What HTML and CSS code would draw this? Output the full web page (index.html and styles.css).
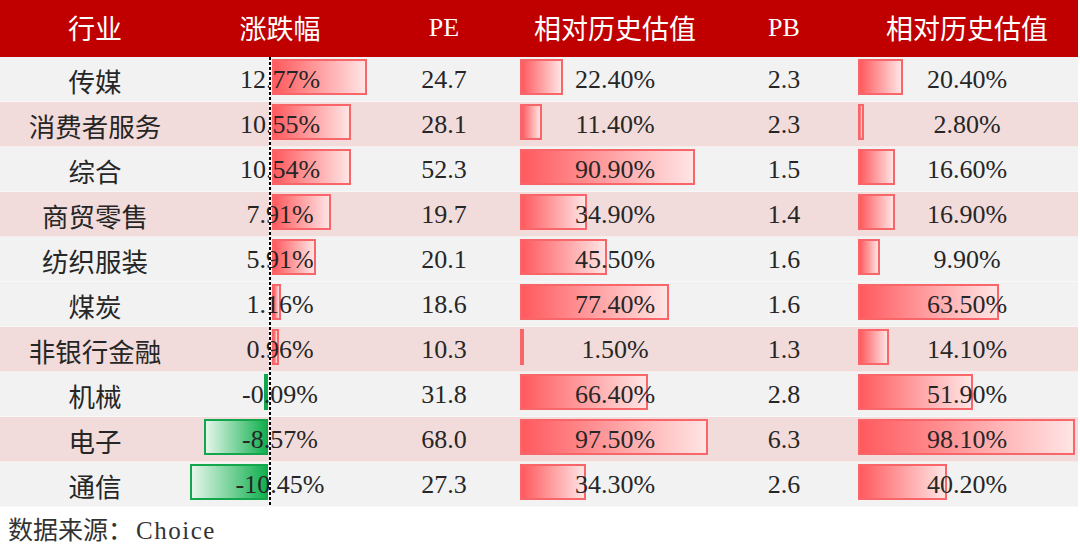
FILE: index.html
```html
<!DOCTYPE html>
<html lang="zh">
<head>
<meta charset="utf-8">
<link rel="stylesheet" href="styles.css">
</head>
<body>
<div class="table">
  <div class="row head">
    <div class="cell">行业</div>
    <div class="cell">涨跌幅</div>
    <div class="cell lat">PE</div>
    <div class="cell">相对历史估值</div>
    <div class="cell lat">PB</div>
    <div class="cell">相对历史估值</div>
  </div>

  <div class="row odd">
    <div class="cell name">传媒</div>
    <div class="cell chg"><span class="bar pos" style="width:95px"></span><span class="txt">12.77%</span></div>
    <div class="cell num">24.7</div>
    <div class="cell val"><span class="bar r4" style="width:43px"></span><span class="txt">22.40%</span></div>
    <div class="cell num">2.3</div>
    <div class="cell val"><span class="bar r6" style="width:45px"></span><span class="txt">20.40%</span></div>
  </div>
  <div class="row even">
    <div class="cell name">消费者服务</div>
    <div class="cell chg"><span class="bar pos" style="width:79px"></span><span class="txt">10.55%</span></div>
    <div class="cell num">28.1</div>
    <div class="cell val"><span class="bar r4" style="width:22px"></span><span class="txt">11.40%</span></div>
    <div class="cell num">2.3</div>
    <div class="cell val"><span class="bar r6" style="width:6px"></span><span class="txt">2.80%</span></div>
  </div>
  <div class="row odd">
    <div class="cell name">综合</div>
    <div class="cell chg"><span class="bar pos" style="width:79px"></span><span class="txt">10.54%</span></div>
    <div class="cell num">52.3</div>
    <div class="cell val"><span class="bar r4" style="width:175px"></span><span class="txt">90.90%</span></div>
    <div class="cell num">1.5</div>
    <div class="cell val"><span class="bar r6" style="width:37px"></span><span class="txt">16.60%</span></div>
  </div>
  <div class="row even">
    <div class="cell name">商贸零售</div>
    <div class="cell chg"><span class="bar pos" style="width:59px"></span><span class="txt">7.91%</span></div>
    <div class="cell num">19.7</div>
    <div class="cell val"><span class="bar r4" style="width:67px"></span><span class="txt">34.90%</span></div>
    <div class="cell num">1.4</div>
    <div class="cell val"><span class="bar r6" style="width:37px"></span><span class="txt">16.90%</span></div>
  </div>
  <div class="row odd">
    <div class="cell name">纺织服装</div>
    <div class="cell chg"><span class="bar pos" style="width:44px"></span><span class="txt">5.91%</span></div>
    <div class="cell num">20.1</div>
    <div class="cell val"><span class="bar r4" style="width:87px"></span><span class="txt">45.50%</span></div>
    <div class="cell num">1.6</div>
    <div class="cell val"><span class="bar r6" style="width:22px"></span><span class="txt">9.90%</span></div>
  </div>
  <div class="row odd">
    <div class="cell name">煤炭</div>
    <div class="cell chg"><span class="bar pos" style="width:9px"></span><span class="txt">1.16%</span></div>
    <div class="cell num">18.6</div>
    <div class="cell val"><span class="bar r4" style="width:149px"></span><span class="txt">77.40%</span></div>
    <div class="cell num">1.6</div>
    <div class="cell val"><span class="bar r6" style="width:141px"></span><span class="txt">63.50%</span></div>
  </div>
  <div class="row even">
    <div class="cell name">非银行金融</div>
    <div class="cell chg"><span class="bar pos" style="width:7px"></span><span class="txt">0.96%</span></div>
    <div class="cell num">10.3</div>
    <div class="cell val"><span class="bar r4" style="width:4px"></span><span class="txt">1.50%</span></div>
    <div class="cell num">1.3</div>
    <div class="cell val"><span class="bar r6" style="width:31px"></span><span class="txt">14.10%</span></div>
  </div>
  <div class="row odd">
    <div class="cell name">机械</div>
    <div class="cell chg"><span class="bar neg" style="width:2px"></span><span class="txt">-0.09%</span></div>
    <div class="cell num">31.8</div>
    <div class="cell val"><span class="bar r4" style="width:128px"></span><span class="txt">66.40%</span></div>
    <div class="cell num">2.8</div>
    <div class="cell val"><span class="bar r6" style="width:115px"></span><span class="txt">51.90%</span></div>
  </div>
  <div class="row even">
    <div class="cell name">电子</div>
    <div class="cell chg"><span class="bar neg" style="width:64px"></span><span class="txt">-8.57%</span></div>
    <div class="cell num">68.0</div>
    <div class="cell val"><span class="bar r4" style="width:188px"></span><span class="txt">97.50%</span></div>
    <div class="cell num">6.3</div>
    <div class="cell val"><span class="bar r6" style="width:217px"></span><span class="txt">98.10%</span></div>
  </div>
  <div class="row odd">
    <div class="cell name">通信</div>
    <div class="cell chg"><span class="bar neg" style="width:78px"></span><span class="txt">-10.45%</span></div>
    <div class="cell num">27.3</div>
    <div class="cell val"><span class="bar r4" style="width:66px"></span><span class="txt">34.30%</span></div>
    <div class="cell num">2.6</div>
    <div class="cell val"><span class="bar r6" style="width:89px"></span><span class="txt">40.20%</span></div>
  </div>
  <div class="axis"></div>
</div>
<div class="source">数据来源：<span class="lat">Choice</span></div>
</body>
</html>
```

FILE: styles.css
```css
html, body {
  margin: 0;
  padding: 0;
  background: #ffffff;
}
body {
  width: 1080px;
  font-family: "Liberation Serif", "Noto Sans CJK SC", serif;
  color: #262626;
}
.table {
  position: relative;
  width: 1078px;
}
.row {
  display: grid;
  grid-template-columns: 190px 180px 148px 194px 144px 222px;
  height: 45px;
}
.row.head {
  height: 57px;
  background: #c00000;
  color: #ffffff;
  font-family: "Noto Sans CJK SC", sans-serif;
  font-size: 27px;
}
.row.head .cell {
  padding-bottom: 2px;
  font-size: 27px;
}
.row.head .lat {
  font-family: "Liberation Serif", serif;
  font-size: 26px;
}
.row.odd { background: #f2f2f2; }
.row.even { background: #f2dcdb; }
.row.odd, .row.even {
  box-shadow: inset 0 -1px 0 rgba(255,255,255,0.45);
}
.cell {
  position: relative;
  display: flex;
  align-items: center;
  justify-content: center;
  font-size: 26px;
  white-space: nowrap;
}
.cell.name {
  font-family: "Noto Sans CJK SC", sans-serif;
  font-size: 26.5px;
  font-weight: 400;
  color: #262626;
  padding-top: 2px;
}
.txt {
  position: relative;
  z-index: 2;
}
.bar {
  position: absolute;
  top: 2px;
  height: 36px;
  box-sizing: border-box;
  z-index: 1;
}
.bar.pos, .bar.r4, .bar.r6 {
  border: 2px solid #f8666a;
  background: linear-gradient(to right, #ff5a5e, #ffe4e4);
}
.bar.pos { left: 82px; }
.bar.r4 { left: 2px; }
.bar.r6 { left: 2px; }
.bar.neg {
  right: 102px;
  border: 2px solid #13a64c;
  background: linear-gradient(to right, #e4f6ea, #13b050);
}
.axis {
  position: absolute;
  left: 269px;
  top: 57px;
  width: 2px;
  height: 450px;
  z-index: 3;
  background: repeating-linear-gradient(to bottom, #000000 0 3px, #ffffff 3px 5px);
}
.source {
  padding: 6px 0 0 8px;
  font-family: "Noto Sans CJK SC", sans-serif;
  font-size: 25px;
  line-height: 30px;
  color: #333333;
}
.source .lat {
  font-family: "Liberation Serif", serif;
  font-size: 25px;
  letter-spacing: 1.5px;
  margin-left: 3px;
}
```
